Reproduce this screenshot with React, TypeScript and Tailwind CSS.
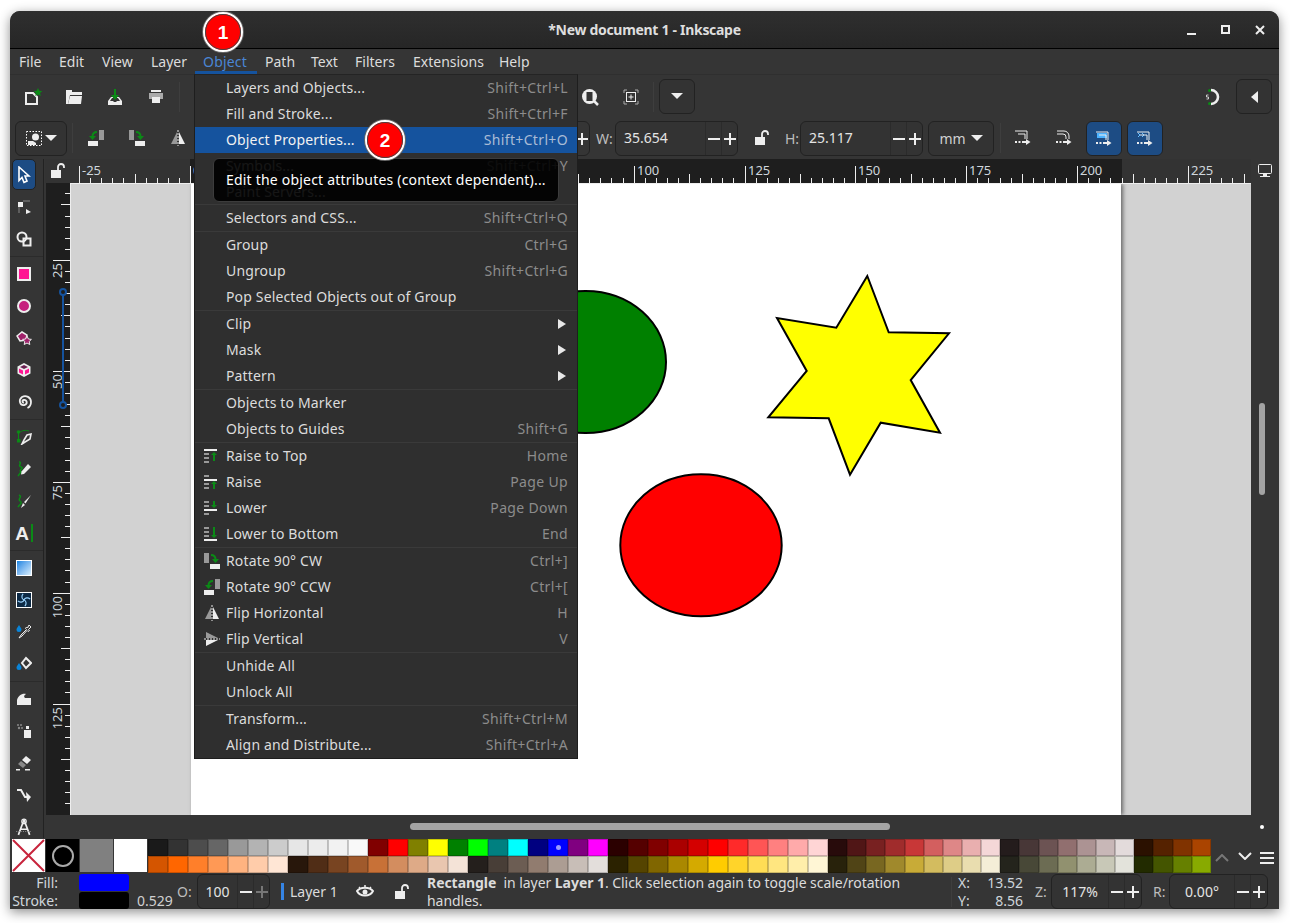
import type { ReactNode } from 'react';

const FONT = "'Noto Sans', 'Open Sans', sans-serif";

const menuBar = [
  { label: 'File', w: 'w-[40px]' },
  { label: 'Edit', w: 'w-[43px]' },
  { label: 'View', w: 'w-[49px]' },
  { label: 'Layer', w: 'w-[52px]' },
  { label: 'Object', w: 'w-[62px]', active: true },
  { label: 'Path', w: 'w-[46px]' },
  { label: 'Text', w: 'w-[44px]' },
  { label: 'Filters', w: 'w-[58px]' },
  { label: 'Extensions', w: 'w-[86px]' },
  { label: 'Help', w: 'w-[40px]' },
];

type Item = { label: string; keys?: string; sub?: boolean; icon?: ReactNode; on?: boolean };

const row1 = ['#1a1a1a','#333333','#4d4d4d','#666666','#999999','#b3b3b3','#cccccc','#e6e6e6','#ececec','#f2f2f2','#f9f9f9','#800000','#ff0000','#808000','#ffff00','#008000','#00ff00','#008080','#00ffff','#000080','#0000ff','#800080','#ff00ff','#2b0000','#550000','#800000','#aa0000','#d40000','#ff0000','#ff2a2a','#ff5555','#ff8080','#ffaaaa','#ffd5d5','#280b0b','#501616','#782121','#a02c2c','#c83737','#d35f5f','#de8787','#e9afaf','#f4d7d7','#241c1c','#483737','#6c5353','#916f6f','#ac9393','#c8b7b7','#e3dbdb','#2b1100','#552200','#803300','#aa4400'];
const row2 = ['#d45500','#ff6600','#ff7f2a','#ff9955','#ffb380','#ffccaa','#ffe6d5','#28170b','#502d16','#784421','#a05a2c','#c87137','#d38d5f','#deaa87','#e9c6af','#f4e3d7','#241f1c','#483e37','#6c5d53','#917c6f','#ac9d93','#c8beb7','#e3dedb','#2b2200','#554400','#806600','#aa8800','#d4aa00','#ffcc00','#ffd42a','#ffdd55','#ffe680','#ffeeaa','#fff6d5','#28220b','#504416','#786721','#a0892c','#c8ab37','#d3bc5f','#decd87','#e9ddaf','#f4eed7','#24241c','#484837','#6c6c53','#91916f','#acac93','#c8c8b7','#e3e3db','#222b00','#445500','#668000','#88aa00'];

function Ic({ s = 16, vb = 16, children }: { s?: number; vb?: number; children: ReactNode }) {
  return (
    <svg width={s} height={s} viewBox={`0 0 ${vb} ${vb}`} className="block shrink-0">
      {children}
    </svg>
  );
}

const W = '#eeeeee';
const G = '#0b8a16';

const RotateCcw = () => (
  <Ic>
    <rect x="11" y="0" width="5" height="10" fill="#999" />
    <rect x="0" y="11" width="10" height="5" fill={W} />
    <path d="M9 2C6 2 4.5 3.5 4.5 6.5" stroke={G} strokeWidth="2" fill="none" />
    <path d="M1 6h7l-3.5 4z" fill={G} />
  </Ic>
);
const RotateCw = () => (
  <Ic>
    <rect x="0" y="0" width="5" height="10" fill="#999" />
    <rect x="6" y="11" width="10" height="5" fill={W} />
    <path d="M7 2C10 2 11.5 3.5 11.5 6.5" stroke={G} strokeWidth="2" fill="none" />
    <path d="M8 6h7l-3.5 4z" fill={G} />
  </Ic>
);
const FlipH = () => (
  <Ic>
    <path d="M7 2v12H1z" fill="#999" />
    <path d="M9 2v12h6z" fill={W} />
    <path d="M8 0v16" stroke={W} strokeDasharray="2 1" />
  </Ic>
);
const FlipV = () => (
  <Ic>
    <path d="M2 1l12 6H2z" fill="#999" />
    <path d="M2 9h12L2 15z" fill={W} />
    <path d="M0 8h16" stroke={W} strokeDasharray="2 1" />
  </Ic>
);
const StackIcon = ({ bar, arrow }: { bar: number; arrow: 'up' | 'down' }) => (
  <Ic>
    {[1, 5, 9, 13].map((y) =>
      y === bar ? (
        <rect key={y} x="0" y={y} width="13" height="2" fill={W} />
      ) : (
        <rect key={y} x="0" y={y} width="5" height="2" fill="#999" />
      )
    )}
    {arrow === 'up' ? (
      <path d={`M10 ${bar === 1 ? 4 : 7}l3 3h-2v${bar === 1 ? 6 : 5}H9v-${bar === 1 ? 6 : 5}H7z`} fill={G} />
    ) : (
      <path d={`M9 1h2v${bar === 13 ? 8 : 4}h2l-3 3-3-3h2z`} fill={G} />
    )}
  </Ic>
);

const menuGroups: Item[][] = [
  [
    { label: 'Layers and Objects...', keys: 'Shift+Ctrl+L' },
    { label: 'Fill and Stroke...', keys: 'Shift+Ctrl+F' },
    { label: 'Object Properties...', keys: 'Shift+Ctrl+O', on: true },
    { label: 'Symbols...', keys: 'Shift+Ctrl+Y' },
    { label: 'Paint Servers...' },
  ],
  [{ label: 'Selectors and CSS...', keys: 'Shift+Ctrl+Q' }],
  [
    { label: 'Group', keys: 'Ctrl+G' },
    { label: 'Ungroup', keys: 'Shift+Ctrl+G' },
    { label: 'Pop Selected Objects out of Group' },
  ],
  [
    { label: 'Clip', sub: true },
    { label: 'Mask', sub: true },
    { label: 'Pattern', sub: true },
  ],
  [
    { label: 'Objects to Marker' },
    { label: 'Objects to Guides', keys: 'Shift+G' },
  ],
  [
    { label: 'Raise to Top', keys: 'Home', icon: <StackIcon bar={1} arrow="up" /> },
    { label: 'Raise', keys: 'Page Up', icon: <StackIcon bar={5} arrow="up" /> },
    { label: 'Lower', keys: 'Page Down', icon: <StackIcon bar={9} arrow="down" /> },
    { label: 'Lower to Bottom', keys: 'End', icon: <StackIcon bar={13} arrow="down" /> },
  ],
  [
    { label: 'Rotate 90° CW', keys: 'Ctrl+]', icon: <RotateCw /> },
    { label: 'Rotate 90° CCW', keys: 'Ctrl+[', icon: <RotateCcw /> },
    { label: 'Flip Horizontal', keys: 'H', icon: <FlipH /> },
    { label: 'Flip Vertical', keys: 'V', icon: <FlipV /> },
  ],
  [{ label: 'Unhide All' }, { label: 'Unlock All' }],
  [
    { label: 'Transform...', keys: 'Shift+Ctrl+M' },
    { label: 'Align and Distribute...', keys: 'Shift+Ctrl+A' },
  ],
];

const tools: (ReactNode | 'sep')[] = [
  <Ic key="node">
    <rect x="2" y="3" width="5" height="5" fill={W} />
    <path d="M7 2h7M3 8v6" stroke="#888" />
    <path d="M10 10l5 3-5 2z" fill={W} />
  </Ic>,
  <Ic key="shape">
    <circle cx="6" cy="6" r="4.5" fill="none" stroke={W} strokeWidth="2" />
    <rect x="7.5" y="7.5" width="7" height="7" fill="none" stroke={W} strokeWidth="2" />
  </Ic>,
  'sep',
  <Ic key="rect">
    <rect x="2" y="2" width="12" height="12" fill="#ff1493" stroke={W} strokeWidth="2" />
  </Ic>,
  <Ic key="circle">
    <circle cx="8" cy="8" r="6" fill="#c6217e" stroke={W} strokeWidth="2" />
  </Ic>,
  <Ic key="star">
    <path d="M1 6l5-4 5 3-1 5-6 1z" fill="#a0206a" stroke={W} strokeWidth="1.5" />
    <path d="M11 6l1.4 3 3 .4-2.2 2.1.6 3-2.8-1.5-2.8 1.500.6-3-2.2-2.1 3-.4z" fill="#a0206a" stroke={W} />
  </Ic>,
  <Ic key="box">
    <path d="M8 1l6.5 3.5v7L8 15l-6.5-3.500v-7z" fill={W} />
    <path d="M8 3l4 2-4 2-4-2z" fill="#6a2050" />
    <path d="M3 6.5l4 2v4l-4-2zM13 6.5l-4 2v4l4-2z" fill="#ff1493" />
  </Ic>,
  <Ic key="spiral">
    <path d="M8 8.500c-1.500.5-2.500-2 0-2.500 3-.5 4 4 .5 5-4.500 1-6.500-5-2.500-8 4-2.500 9 .5 9 5 0 3-1.500 5-3.500 6" fill="none" stroke={W} strokeWidth="1.800" />
  </Ic>,
  'sep',
  <Ic key="pen">
    <rect x="1" y="10" width="3.5" height="3.5" fill={G} />
    <circle cx="2.5" cy="3" r="1.8" fill={G} />
    <path d="M2.5 3v7M3 4c3-3 7-3 10-2" stroke={G} fill="none" />
    <path d="M15 5l-1 5-5 3-3 2 2-4 3-5z" fill="none" stroke={W} strokeWidth="1.6" />
  </Ic>,
  <Ic key="pencil">
    <path d="M3 1c4 0-2 4 2 5s-3 3 0 5l-3 4" stroke={G} strokeWidth="1.5" fill="none" />
    <path d="M12 3l3 3-7 7-3 .5.5-3z" fill={W} />
  </Ic>,
  <Ic key="callig">
    <path d="M3 2c4 2-2 4 1 6s0 3-2 6" stroke={G} strokeWidth="1.5" fill="none" />
    <path d="M15 2L8 9l1.5 1.5zM7 10l2 2-4 3z" fill={W} />
  </Ic>,
  <div key="text" className="flex items-center gap-[2px]">
    <span className="text-[19px] leading-none font-bold text-[#eeeeee] font-['Liberation_Sans',sans-serif]">A</span>
    <span className="w-[2px] h-[18px] bg-[#0b8a16]" />
  </div>,
  'sep',
  <div key="grad" className="w-4 h-4 border border-white bg-gradient-to-br from-[#0a84e0] to-[#d8eefc]" />,
  <div key="mesh" className="w-4 h-4 border border-white bg-[#0d2a45] flex items-center justify-center">
    <Ic s={14}>
      <path d="M8 8C5 7 5 3 7 1M8 8c1-3 5-3 7-1M8 8c3 1 3 5 1 7M8 8c-1 3-5 3-7 1" stroke="#9ad4ff" strokeWidth="1.3" fill="none" />
    </Ic>
  </div>,
  <Ic key="drop">
    <path d="M3 1c1 2 2.5 3 2.5 4.5a2.500 2.500 0 0 1-5 0C.5 4 2 3 3 1z" fill="#0a84d8" />
    <path d="M13 1l2 2-2.5 2.5 1 1-1.5 1-1-1L6 12l-3 2 2-3 5.500-5.500-1-1 1-1.500 1 1z" fill="none" stroke={W} />
  </Ic>,
  <Ic key="bucket">
    <path d="M10 2l5 5-5 5-4-5z" fill="none" stroke={W} strokeWidth="2" />
    <path d="M3 7c1 2 2.5 3 2.5 4.5a2.500 2.500 0 0 1-5 0C.5 10 2 9 3 7z" fill="#0a84d8" />
  </Ic>,
  'sep',
  <Ic key="tweak">
    <path d="M1 14V9c1-4 5-7 9-6-2 1-2.5 3-1 4h6v7z" fill={W} />
  </Ic>,
  <Ic key="spray">
    <rect x="8" y="7" width="7" height="8" fill={W} />
    <rect x="10" y="3" width="3" height="3" fill={W} />
    <circle cx="2" cy="2" r="1" fill="#888" />
    <circle cx="5" cy="2" r="1" fill="#888" />
    <circle cx="3" cy="5" r="1.2" fill="#888" />
    <circle cx="6" cy="5" r="1" fill="#888" />
  </Ic>,
  <Ic key="eraser">
    <path d="M10 1l5 4-4 4-5-4z" fill={W} />
    <path d="M5 6l5 4-3 3-5-4z" fill="#888" />
    <rect x="0" y="14" width="4" height="1.5" fill={W} />
    <rect x="9" y="14" width="5" height="1.5" fill={W} />
  </Ic>,
  <Ic key="conn">
    <path d="M1 3h4l4 7h3" stroke={W} strokeWidth="2" fill="none" />
    <path d="M10 5l5 5-4 5z" fill={W} />
  </Ic>,
  <Ic key="measure" s={18}>
    <path d="M8 1.5L3 15M8 1.5L13 15M4.5 10h7" stroke={W} strokeWidth="1.5" fill="none" />
    <circle cx="8" cy="3" r="2" fill="none" stroke={W} />
    <path d="M1 12h14" stroke="#888" strokeDasharray="1 1" />
  </Ic>,
];

function Pm({ plus, dim }: { plus?: boolean; dim?: boolean }) {
  const c = dim ? '#777777' : '#eeeeee';
  return (
    <svg width="12" height="12" viewBox="0 0 12 12" className="block">
      <rect x="0" y="5" width="12" height="2" fill={c} />
      {plus && <rect x="5" y="0" width="2" height="12" fill={c} />}
    </svg>
  );
}

function Spin({ value, w, vw, dimPlus }: { value: string; w: string; vw: string; dimPlus?: boolean }) {
  return (
    <div className={`${w} h-full flex items-stretch rounded-[6px] border border-[#222222] bg-[#333333] text-[#e4e4e4] text-[14px]`}>
      <div className={`${vw} flex items-center`}>{value}</div>
      <div className="w-[16px] border-l border-[#2b2b2b] flex items-center justify-center"><Pm /></div>
      <div className="flex-1 border-l border-[#2b2b2b] flex items-center justify-center"><Pm plus dim={dimPlus} /></div>
    </div>
  );
}

function Lock() {
  return (
    <svg width="16" height="16" viewBox="0 0 16 16" className="block">
      <rect x="1" y="7" width="10" height="8" fill={W} />
      <path d="M8 7V4a3 3 0 0 1 6 0v1" stroke={W} strokeWidth="1.8" fill="none" />
    </svg>
  );
}

function Arrow({ color = '#eeeeee' }: { color?: string }) {
  return (
    <svg width="12" height="7" viewBox="0 0 12 7" className="block">
      <path d="M0 0h12L6 6z" fill={color} />
    </svg>
  );
}

function SnapLines({ round, blue, chev }: { round?: boolean; blue?: boolean; chev?: boolean }) {
  return (
    <svg width="16" height="16" viewBox="0 0 16 16" className="block">
      {blue && !chev && <rect x="1" y="2" width="10" height="5" fill="#4bb2ff" />}
      {chev && <path d="M1 2l2 2-2 2M5 2l2 2-2 2" stroke="#6cc0ff" fill="none" />}
      {round ? (
        <path d="M1 1h7a5 5 0 0 1 5 5v3M1 4h6a3 3 0 0 1 3 3v2" stroke={W} fill="none" />
      ) : (
        <path d="M0 1h12v8M3 4h7v5" stroke={W} fill="none" />
      )}
      <path d="M0 12h2M3.5 12h2M7 12h5" stroke={W} strokeWidth="2" />
      <path d="M11 9l4.500 3-4.500 3z" fill={W} />
    </svg>
  );
}

function HRuler() {
  const ticks = [];
  for (let k = -11; k <= 96; k++) {
    const x = Math.round(120 + k * 11.09) + 0.5;
    if (x < 0 || x > 1181) continue;
    const h = k % 10 === 0 ? 17 : k % 5 === 0 ? 9 : 5;
    ticks.push(<path key={k} d={`M${x} ${24 - h}V24`} stroke="#eeeeee" />);
    if (k % 10 === 0) {
      ticks.push(
        <text key={`l${k}`} x={x + 2.5} y={16} fontSize="13" fill="#cfd6dc" fontFamily={FONT}>
          {(k * 2.5).toString()}
        </text>
      );
    }
  }
  return (
    <svg width="1181" height="24" viewBox="0 0 1181 24" className="block">
      <rect x="0" y="0" width="1181" height="24" fill="#333333" />
      <rect x="120" y="0" width="932" height="24" fill="#1e1e1e" />
      {ticks}
    </svg>
  );
}

function VRuler() {
  const ticks = [];
  for (let k = 0; k < 60; k++) {
    const y = Math.round(149 - 183 + k * 11.09) + 0.5;
    if (y < 0 || y > 632) continue;
    const x = k % 10 === 0 ? 8 : k % 5 === 0 ? 16 : 20;
    ticks.push(<path key={k} d={`M${x} ${y}H25`} stroke="#eeeeee" />);
    if (k % 10 === 0 && k > 0) {
      ticks.push(
        <text key={`l${k}`} transform={`translate(17 ${y + 2.5}) rotate(-90)`} textAnchor="end" fontSize="13" fill="#cfd6dc" fontFamily={FONT}>
          {(k * 2.5).toString()}
        </text>
      );
    }
  }
  return (
    <svg width="25" height="632" viewBox="0 0 25 632" className="block shrink-0">
      <rect x="1" y="0" width="24" height="632" fill="#1e1e1e" />
      {ticks}
      <path d="M18 109V222" stroke="#15539e" strokeWidth="2" />
      <circle cx="18" cy="109" r="3" fill="#1e1e1e" stroke="#15539e" strokeWidth="2" />
      <circle cx="18" cy="222" r="3" fill="#1e1e1e" stroke="#15539e" strokeWidth="2" />
    </svg>
  );
}

function Badge({ n, pos }: { n: string; pos: string }) {
  return (
    <div className={`absolute ${pos} z-30 w-10 h-10 rounded-full bg-[#ff0000] border-[2px] border-white ring-1 ring-[#666666] outline outline-1 -outline-offset-[3px] outline-[#444444] flex items-center justify-center text-white font-bold text-[19px] leading-none font-['Liberation_Sans',sans-serif]`}>
      {n}
    </div>
  );
}

function ObjectMenu() {
  return (
    <div className="absolute left-[184px] top-[63px] z-20 w-[384px] bg-[#2f2f2f] border border-[#1e1e1e] border-t-[#242424] text-[14px] leading-none tracking-[0.15px]">
      {menuGroups.map((group, gi) => (
        <div key={gi} className={gi === 1 ? '-mt-px border-t border-[#3a3a3a] relative' : gi > 1 ? 'border-t border-[#3a3a3a]' : ''}>
          {group.map((it) => (
            <div key={it.label} className={`h-[26px] flex items-center pr-[9px] ${it.on ? 'bg-[#15539e] text-[#f2f2f2]' : 'text-[#dcdcdc]'}`}>
              <div className="w-[31px] pl-[9px] shrink-0">{it.icon}</div>
              <span>{it.label}</span>
              {it.keys && <span className={`ml-auto tracking-[0.35px] ${it.on ? 'text-[#a9bcd6]' : 'text-[#8c8c8c]'}`}>{it.keys}</span>}
              {it.sub && (
                <svg width="8" height="10" viewBox="0 0 8 10" className="ml-auto mr-[2px]">
                  <path d="M0 0l8 5-8 5z" fill="#e8e8e8" />
                </svg>
              )}
            </div>
          ))}
        </div>
      ))}
    </div>
  );
}

function Swatch({ top, bottom, dot }: { top: string; bottom: string; dot: boolean }) {
  return (
    <>
      <div className="border border-black/20 flex items-center justify-center" style={{ backgroundColor: top }}>
        {dot && <div className="w-[5px] h-[5px] rounded-full bg-[#9a9aff]" />}
      </div>
      <div className="border border-black/20" style={{ backgroundColor: bottom }} />
    </>
  );
}

export default function App() {
  return (
    <div className="w-[1290px] h-[923px] bg-white pl-[10px] pt-[11px] overflow-hidden" style={{ fontFamily: FONT }}>
      <div className="relative w-[1269px] h-[898px] bg-[#353535] rounded-t-[10px] shadow-[0_3px_12px_rgba(0,0,0,0.45)] flex flex-col text-[#dcdcdc] text-[14px]">
        {/* title bar */}
        <div className="h-[38px] shrink-0 rounded-t-[10px] bg-gradient-to-b from-[#2f2f2f] to-[#262626] border-b border-black grid grid-cols-[1fr_auto_1fr] items-center">
          <div />
          <div className="font-bold text-[14px] text-[#dedede] tracking-[-0.3px]">*New document 1 - Inkscape</div>
          <div className="flex justify-end items-center pr-[12px]">
            <svg width="14" height="14" viewBox="0 0 14 14" className="mr-[20px]"><rect x="2" y="10" width="9" height="2" fill="#eee" /></svg>
            <svg width="14" height="14" viewBox="0 0 14 14" className="mr-[20px]"><rect x="3" y="3" width="7" height="7" fill="none" stroke="#eee" strokeWidth="2" /></svg>
            <svg width="14" height="14" viewBox="0 0 14 14"><path d="M3 3l8 8M11 3l-8 8" stroke="#eee" strokeWidth="2" /></svg>
          </div>
        </div>

        {/* menu bar */}
        <div className="h-[26px] shrink-0 flex pl-px border-b border-[#2f2f2f]">
          {menuBar.map((m) => (
            <div key={m.label} className={`${m.w} pl-2 flex items-center ${m.active ? 'text-[#4a86d4] border-b-[3px] border-[#15539e] pt-[3px] tracking-[0.2px]' : ''}`}>
              {m.label}
            </div>
          ))}
        </div>

        {/* commands bar */}
        <div className="h-[45px] shrink-0 flex items-center pl-[10px] pr-[7px] pb-[2px]">
          <Ic s={24} vb={24}>
            <path d="M6 8h7l4 4v7H6z" fill="none" stroke={W} strokeWidth="2" />
            <path d="M18 3l1.3 2.7 3 .4-2.2 2 .6 3-2.7-1.500-2.700 1.500.6-3-2.200-2 3-.4z" fill={G} />
          </Ic>
          <div className="ml-[18px]">
            <Ic s={24} vb={24}>
              <path d="M4 5h6v2h10v3H8l-2 9H4z" fill={W} />
              <path d="M8 11h12l-1 8H6z" fill={W} />
            </Ic>
          </div>
          <div className="ml-[17px]">
            <Ic s={24} vb={24}>
              <path d="M5 16l3-4h2v1H9l-2 3h3l1 1h2l1-1h3l-2-3h-1v-1h2l3 4v4H5z" fill={W} />
              <path d="M11 4h2v6h3l-4 5-4-5h3z" fill={G} />
            </Ic>
          </div>
          <div className="ml-[17px]">
            <Ic s={24} vb={24}>
              <rect x="7" y="5" width="10" height="2" fill={W} />
              <path d="M5 8h14v6H5z" fill="#aaa" />
              <rect x="8" y="12" width="8" height="6" fill={W} />
            </Ic>
          </div>
          <div className="w-px h-[30px] bg-[#3e3e3e] ml-[11px]" />
          <div className="ml-[398px]">
            <Ic s={24} vb={24}>
              <circle cx="11.5" cy="11.5" r="7.5" fill={W} />
              <rect x="8" y="6.5" width="7" height="10" fill="#333" stroke={W} />
              <path d="M16 16l4 4" stroke={W} strokeWidth="2.5" />
            </Ic>
          </div>
          <div className="ml-[17px]">
            <Ic s={24} vb={24}>
              <path d="M5 8V5h3M16 5h3v3M19 16v3h-3M8 19H5v-3" stroke="#aaa" fill="none" />
              <rect x="7.5" y="7.5" width="9" height="9" fill="none" stroke={W} />
              <path d="M12 9.5v5M9.5 12h5" stroke={W} />
            </Ic>
          </div>
          <div className="w-px h-[30px] bg-[#3e3e3e] ml-[10px]" />
          <div className="ml-[5px] w-[36px] h-[35px] rounded-[6px] border border-[#222222] bg-[#333333] flex items-center justify-center"><Arrow /></div>
          <div className="ml-auto mr-[14px]">
            <Ic s={18} vb={18}>
              <path d="M7 2a7 7 0 1 1 0 14" stroke={W} strokeWidth="2.6" fill="none" />
              <circle cx="5.500" cy="2.500" r="1.500" fill={G} />
              <circle cx="5.500" cy="15.500" r="1.500" fill={G} />
              <path d="M4.500 7h-2v2h2v2h-2" stroke={W} strokeWidth="0.8" fill="none" />
            </Ic>
          </div>
          <div className="w-[36px] h-[35px] rounded-[6px] border border-[#222222] bg-[#333333] flex items-center justify-center">
            <svg width="7" height="12" viewBox="0 0 7 12"><path d="M7 0v12L0 6z" fill="#eee" /></svg>
          </div>
        </div>

        {/* tool controls bar */}
        <div className="h-[39px] shrink-0 flex items-start pt-px pl-[5px]">
          <div className="w-[52px] h-[35px] rounded-[6px] border border-[#222222] bg-[#333333] flex items-center justify-center gap-[3px]">
            <svg width="16" height="16" viewBox="0 0 16 16">
              <rect x="0.5" y="0.5" width="15" height="14" fill="none" stroke="#fff" strokeDasharray="1.5 1.5" />
              <circle cx="9.5" cy="6" r="3.5" fill={W} />
              <path d="M2 10h5l3 2v2H2z" fill={W} />
            </svg>
            <Arrow />
          </div>
          <div className="w-px h-[30px] bg-[#3e3e3e] ml-[5px] mt-[2px]" />
          <div className="ml-[15px] mt-[9px]"><RotateCcw /></div>
          <div className="ml-[25px] mt-[9px]"><RotateCw /></div>
          <div className="ml-[25px] mt-[9px]"><FlipH /></div>
          <div className="ml-[314px] w-[90px] h-[35px] rounded-r-[6px] border border-[#222222] flex items-center justify-end pr-[1px] shrink-0">
            <Pm plus />
          </div>
          <div className="ml-[6px] w-[19px] h-[35px] flex items-center text-[#bdbdbd]">W:</div>
          <div className="h-[35px]"><Spin value="35.654" w="w-[123px]" vw="w-[89px] pl-2 pb-[2px]" /></div>
          <div className="ml-[16px] mt-[9px]"><Lock /></div>
          <div className="ml-[15px] w-[15px] h-[35px] flex items-center text-[#bdbdbd]">H:</div>
          <div className="h-[35px]"><Spin value="25.117" w="w-[123px]" vw="w-[89px] pl-2 pb-[2px]" /></div>
          <div className="ml-[5px] w-[66px] h-[35px] rounded-[6px] border border-[#222222] bg-[#333333] flex items-center justify-center gap-[5px] text-[#d0d0d0]">
            mm <Arrow />
          </div>
          <div className="w-px h-[30px] bg-[#3e3e3e] ml-[6px] mt-[2px]" />
          <div className="ml-[14px] mt-[9px]"><SnapLines /></div>
          <div className="ml-[25px] mt-[9px]"><SnapLines round /></div>
          <div className="ml-[14px] w-[36px] h-[35px] rounded-[6px] border border-[#222222] bg-[#1d4c84] flex items-center justify-center"><SnapLines blue /></div>
          <div className="ml-[5px] w-[36px] h-[35px] rounded-[6px] border border-[#222222] bg-[#1d4c84] flex items-center justify-center"><SnapLines blue chev /></div>
        </div>

        {/* main area */}
        <div className="h-[679px] shrink-0 flex">
          <div className="w-[34px] shrink-0 border-r border-[#222222] overflow-hidden">
            <div className="h-[32px] flex items-start justify-center pr-[5px]">
              <div className="w-[24px] h-[31px] rounded-[5px] border border-[#222222] bg-[#1d4c84] flex items-center justify-center">
                <svg width="14" height="18" viewBox="0 0 14 18">
                  <path d="M2 1l10 9H8l2 5-3 1.500-2-5-3 3z" fill="#1d4c84" stroke="#fff" strokeWidth="1.6" />
                </svg>
              </div>
            </div>
            {tools.map((t, i) =>
              t === 'sep' ? (
                <div key={i} className="h-[3px] flex items-center"><div className="h-px w-full bg-[#2b2b2b]" /></div>
              ) : (
                <div key={i} className="h-8 flex items-center justify-center pr-[5px]">{t}</div>
              )
            )}
          </div>

          <div className="flex-1 min-w-0 flex flex-col pl-px">
            <div className="h-[24px] shrink-0 flex">
              <div className="w-[25px] shrink-0 flex items-center justify-center bg-[#333333]"><Lock /></div>
              <HRuler />
              <div className="flex-1 flex items-center justify-center">
                <svg width="20" height="18" viewBox="0 0 20 18">
                  <rect x="3.5" y="2.5" width="13" height="9" rx="1" fill="none" stroke={W} />
                  <rect x="8" y="12" width="4" height="2" fill={W} />
                  <rect x="5" y="14" width="10" height="1" fill={W} />
                </svg>
              </div>
            </div>
            <div className="h-[632px] shrink-0 flex">
              <VRuler />
              <div className="w-[1181px] shrink-0 bg-[#d2d2d2] border-t border-l border-[#eeeeee] overflow-hidden">
                <div className="ml-[120px] w-[930px] h-full bg-white shadow-[2px_0_4px_rgba(0,0,0,0.5)]">
                  <svg width="930" height="632" viewBox="191 184 930 632" className="block">
                    <ellipse cx="585.5" cy="362" rx="80.5" ry="71" fill="#008000" stroke="#000" strokeWidth="2" />
                    <polygon points="867.3,276 888.7,332.3 949,333.3 910.7,380 940,432.7 880.7,422.7 850,474.7 828.7,418.3 768.3,417.3 806.7,371 777,318 836.3,327.7" fill="#ffff00" stroke="#000" strokeWidth="2" />
                    <ellipse cx="701" cy="545.3" rx="80.7" ry="71" fill="#ff0000" stroke="#000" strokeWidth="2" />
                  </svg>
                </div>
              </div>
              <div className="flex-1 pl-[8px] pt-[220px]">
                <div className="w-[6px] h-[92px] rounded-full bg-[#a4a4a4]" />
              </div>
            </div>
            <div className="flex-1 flex items-center pl-[365px] pr-[15px]">
              <div className="w-[480px] h-[7px] rounded-full bg-[#a4a4a4]" />
              <div className="ml-auto w-[4px] h-[4px] rounded-full bg-white" />
            </div>
          </div>
        </div>

        {/* palette */}
        <div className="h-[34px] shrink-0 flex pl-[2px] pt-px">
          <div className="w-[33px] h-[33px] shrink-0 bg-white">
            <svg width="33" height="33" viewBox="0 0 33 33" className="block"><path d="M1 1l31 31M32 1L1 32" stroke="#c8243c" strokeWidth="2" /></svg>
          </div>
          <div className="ml-px w-[33px] h-[33px] shrink-0 bg-black flex items-center justify-center">
            <div className="w-[22px] h-[22px] rounded-full border-2 border-[#aaaaaa]" />
          </div>
          <div className="ml-px w-[33px] h-[33px] shrink-0 bg-[#808080]" />
          <div className="ml-px w-[33px] h-[33px] shrink-0 bg-white" />
          <div className="ml-px grid grid-cols-[repeat(34,20px)_repeat(20,19.15px)] grid-rows-[17px_17px] grid-flow-col shrink-0">
            {row1.map((c, i) => (
              <Swatch key={i} top={c} bottom={row2[i]} dot={i === 20} />
            ))}
          </div>
          <div className="ml-auto flex items-center h-[33px] pr-[5px]">
            <svg width="14" height="8" viewBox="0 0 14 8" className="mr-[9px] mt-[4px]"><path d="M1 7l6-6 6 6" stroke="#777" strokeWidth="2" fill="none" /></svg>
            <svg width="14" height="8" viewBox="0 0 14 8" className="mr-[8px]"><path d="M1 1l6 6 6-6" stroke="#eee" strokeWidth="2" fill="none" /></svg>
            <svg width="14" height="12" viewBox="0 0 14 12" className="mt-[5px]"><path d="M0 1h14M0 6h14M0 11h14" stroke="#eee" strokeWidth="2" /></svg>
          </div>
        </div>

        {/* status bar */}
        <div className="h-[37px] shrink-0 flex items-center pt-[2px]">
          <div className="w-[48px] text-right leading-[18px] text-[#cfd6dc]">
            <div>Fill:</div>
            <div>Stroke:</div>
          </div>
          <div className="ml-[21px] w-[50px] flex flex-col gap-px">
            <div className="h-[17px] rounded-[3px] bg-[#0000ff]" />
            <div className="h-[17px] rounded-[3px] bg-black" />
          </div>
          <div className="ml-[8px] w-[40px] pt-[17px] text-[#d0d0d0]">0.529</div>
          <div className="w-[20px] text-[#bdbdbd]">O:</div>
          <div className="h-[35px]"><Spin value="100" w="w-[73px]" vw="w-[39px] justify-center" dimPlus /></div>
          <div className="ml-[11px] w-[3px] h-[17px] bg-[#3584e4]" />
          <div className="ml-[6px] w-[60px]">Layer 1</div>
          <div className="ml-[6px]">
            <svg width="18" height="16" viewBox="0 0 18 16" className="block">
              <path d="M1 7c3-4.5 13-4.500 16 0-3 6-13 6-16 0z" fill="none" stroke={W} strokeWidth="2" />
              <circle cx="9" cy="8" r="2.5" fill={W} />
              <path d="M3 3l1 1M15 3l-1 1M9 1v2" stroke={W} strokeWidth="1.5" />
            </svg>
          </div>
          <div className="ml-[20px]"><Lock /></div>
          <div className="ml-[17px] w-[524px] leading-[18px] text-[#dcdcdc] tracking-[-0.05px]">
            <b>Rectangle</b>&nbsp; in layer <b>Layer 1</b>. Click selection again to toggle scale/rotation
            <br />
            handles.
          </div>
          <div className="w-px h-[30px] bg-[#3e3e3e]" />
          <div className="ml-[6px] w-[65px] leading-[18px] text-[#cfd6dc]">
            <div className="flex justify-between"><span>X:</span><span>13.52</span></div>
            <div className="flex justify-between"><span>Y:</span><span>8.56</span></div>
          </div>
          <div className="ml-[12px] w-[16px] text-[#bdbdbd]">Z:</div>
          <div className="h-[35px]"><Spin value="117%" w="w-[91px]" vw="w-[56px] justify-center" /></div>
          <div className="ml-[11px] w-[16px] text-[#bdbdbd]">R:</div>
          <div className="h-[35px]"><Spin value="0.00°" w="w-[99px]" vw="w-[64px] justify-center" /></div>
        </div>

        <ObjectMenu />
        <div className="absolute left-[203px] top-[147px] z-20 w-[346px] h-[44px] rounded-[6px] bg-black/90 border border-[#3c3c3c] flex items-center pl-[12px] pb-[2px] text-white text-[14px] tracking-[0.2px]">
          Edit the object attributes (context dependent)...
        </div>
        <Badge n="1" pos="left-[193px] top-[1px]" />
        <Badge n="2" pos="left-[355px] top-[109px]" />
      </div>
    </div>
  );
}
